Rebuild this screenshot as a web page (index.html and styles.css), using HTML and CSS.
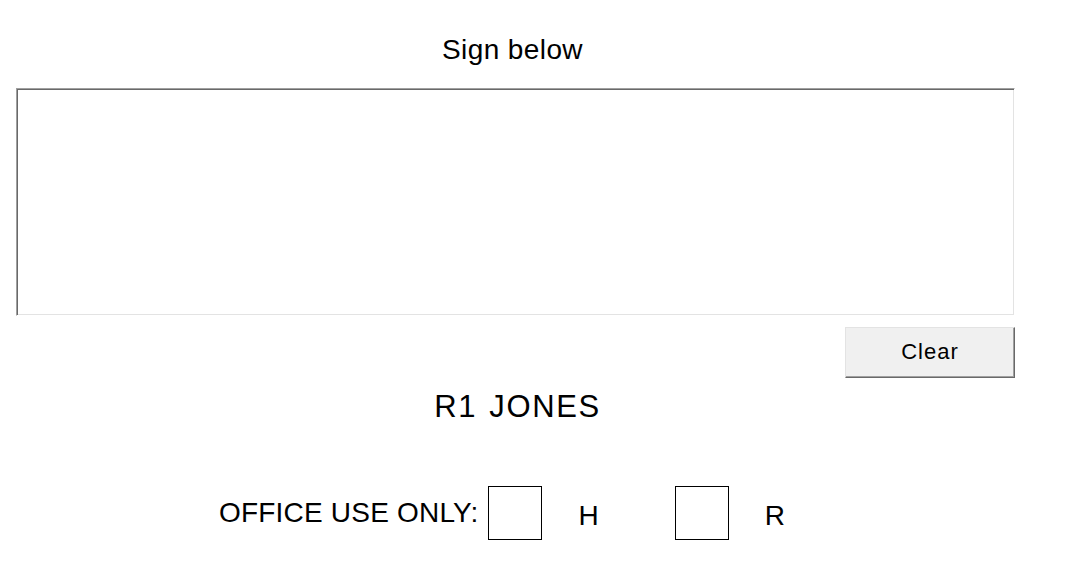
FILE: index.html
```html
<!DOCTYPE html>
<html lang="en">
  <head>
    <meta charset="UTF-8" />
    <meta name="viewport" content="width=device-width, initial-scale=1.0" />
    <title>Sign</title>
    <link rel="stylesheet" href="styles.css">
  </head>
  <body>
    <div class="sheet">
      <h1 class="title">Sign below</h1>
      <canvas class="pad" id="pad" width="995" height="224"></canvas>
      <div class="actions">
        <button type="button" class="clear" id="clear">Clear</button>
      </div>
      <h2 class="name">R1 JONES</h2>
    </div>
    <div class="office">
      <span class="office-label">OFFICE USE ONLY:</span>
      <span class="tick"></span>
      <span class="tick-label">H</span>
      <span class="tick tick-second"></span>
      <span class="tick-label">R</span>
    </div>
  </body>
</html>
```

FILE: styles.css
```css
body {
  margin: 0;
  font-family: "Liberation Sans", Arial, sans-serif;
  color: #000;
  background: #fff;
}
.sheet {
  width: 999px;
  margin-left: 16px;
}
.title {
  margin: 34px 0 22px;
  font-size: 28px;
  font-weight: normal;
  line-height: 32px;
  text-align: center;
  letter-spacing: 0.4px;
  padding-right: 6px;
}
.pad {
  display: block;
  width: 999px;
  height: 228px;
  box-sizing: border-box;
  border: 1px solid;
  border-color: #a0a0a0 #fff #fff #a0a0a0;
  box-shadow: inset 1px 1px #696969, inset -1px -1px #e3e3e3;
  background: #fff;
}
.actions {
  display: flex;
  justify-content: flex-end;
  margin-top: 11px;
}
.clear {
  width: 170px;
  height: 51px;
  padding: 0 0 2px;
  box-sizing: border-box;
  background: #f0f0f0;
  border: 1px solid;
  border-color: #e3e3e3 #696969 #696969 #e3e3e3;
  box-shadow: inset -1px -1px #a0a0a0;
  font-family: "Liberation Sans", Arial, sans-serif;
  font-size: 22px;
  letter-spacing: 1px;
  color: #000;
}
.name {
  margin: 11px 0 0;
  font-size: 31px;
  font-weight: normal;
  line-height: 36px;
  text-align: center;
  letter-spacing: 1.6px;
  word-spacing: 2px;
  padding-left: 4px;
}
.office {
  display: flex;
  align-items: flex-start;
  margin: 61px 0 0 219px;
}
.office-label {
  margin-top: 11px;
  font-size: 28px;
  line-height: 32px;
  letter-spacing: 0.2px;
}
.tick {
  width: 52px;
  height: 52px;
  margin-left: 10px;
  border: 1px solid #000;
}
.tick-second {
  margin-left: 76px;
}
.tick-label {
  margin: 14px 0 0 36px;
  font-size: 28px;
  line-height: 32px;
}
```
